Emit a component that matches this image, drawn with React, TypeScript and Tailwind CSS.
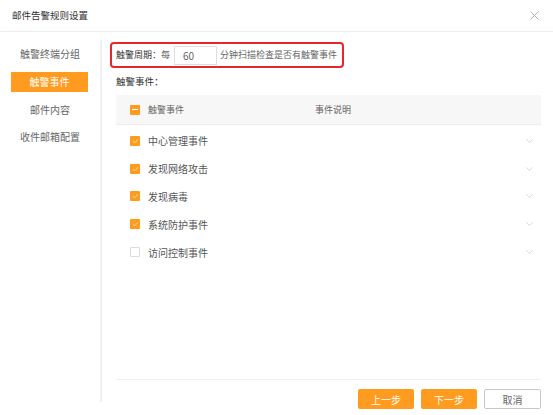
const orange = "bg-[#ff9c1f]";

const events = [
  { name: "中心管理事件", checked: true },
  { name: "发现网络攻击", checked: true },
  { name: "发现病毒", checked: true },
  { name: "系统防护事件", checked: true },
  { name: "访问控制事件", checked: false },
];

const menu = ["触警终端分组", "触警事件", "邮件内容", "收件邮箱配置"];

function Check({ state }: { state: "on" | "off" | "part" }) {
  if (state === "off") {
    return <span className="block h-[10px] w-[10px] rounded-[1px] border border-[#dcdcdc] bg-white" />;
  }
  return (
    <span className={`flex h-[10px] w-[10px] items-center justify-center rounded-[1px] ${orange}`}>
      {state === "on" ? (
        <svg width="7" height="6" viewBox="0 0 7 6" fill="none">
          <path d="M0.8 3 L2.8 4.8 L6.2 1" stroke="#ffd9a8" strokeWidth="1" />
        </svg>
      ) : (
        <span className="block h-[1.5px] w-[6px] bg-white" />
      )}
    </span>
  );
}

export default function App() {
  return (
    <div className="h-[415px] w-[553px] bg-white font-['Noto_Sans_CJK_SC',sans-serif] text-[#666]">
      {/* Header */}
      <div className="flex h-[32px] items-center justify-between border-b border-[#ececec] pl-[12px] pr-[14px]">
        <span className="text-[9.5px] text-[#333]">邮件告警规则设置</span>
        <svg width="9" height="9" viewBox="0 0 9 9">
          <path d="M0.5 0.5 L8.5 8.5 M8.5 0.5 L0.5 8.5" stroke="#aaa" strokeWidth="0.9" />
        </svg>
      </div>

      <div className="flex pt-[8px]">
        {/* Sidebar */}
        <div className="h-[362px] w-[102px] shrink-0 border-r-2 border-[#efefef]">
          {menu.map((m, i) => (
            <div key={m} className="flex h-[27.7px] items-center">
              {i === 1 ? (
                <div className={`ml-[11px] flex h-[20px] w-[77px] items-center justify-center text-[10px] text-white ${orange}`}>
                  {m}
                </div>
              ) : (
                <div className="w-[100px] text-center text-[10px]">{m}</div>
              )}
            </div>
          ))}
        </div>

        {/* Content */}
        <div className="flex flex-1 flex-col pl-[14px] pr-[12px]">
          <div className="-ml-[6px] mt-[2px] flex h-[26px] w-[234px] items-center whitespace-nowrap rounded-[4px] border-2 border-[#e8262a] px-[4px] text-[9px]">
            <span className="text-[#333]">触警周期：</span>
            <span>每</span>
            <div className="ml-[4px] flex h-[19px] w-[43px] shrink-0 items-center border border-[#dedede] pl-[8px] text-[10px]">
              60
            </div>
            <span className="ml-[3px]">分钟扫描检查是否有触警事件</span>
          </div>

          <div className="mt-[5px] h-[16px] text-[9.5px] leading-[16px] text-[#333]">触警事件：</div>

          <div className="mt-[6px] h-[285px] border-b border-[#efefef]">
            <div className="flex h-[30px] items-center border-b border-[#ececec] bg-[#f7f7f7] text-[9px]">
              <div className="flex w-[199px] items-center gap-[8px] pl-[14px]">
                <Check state="part" />
                <span>触警事件</span>
              </div>
              <span>事件说明</span>
            </div>
            <div className="pt-[2px]">
              {events.map((e) => (
                <div key={e.name} className="flex h-[27.8px] items-center pl-[14px] pr-[8px]">
                  <Check state={e.checked ? "on" : "off"} />
                  <span className="ml-[8px] flex-1 text-[10px] text-[#555]">{e.name}</span>
                  <svg width="7" height="4" viewBox="0 0 7 4">
                    <path d="M0.3 0.3 L3.5 3.5 L6.7 0.3" fill="none" stroke="#c8c8c8" strokeWidth="0.7" />
                  </svg>
                </div>
              ))}
            </div>
          </div>

          <div className="mt-[9px] flex justify-end gap-[7px] text-[10px]">
            <button className={`h-[20px] w-[56px] rounded-[2px] text-white ${orange}`}>上一步</button>
            <button className={`h-[20px] w-[56px] rounded-[2px] text-white ${orange}`}>下一步</button>
            <button className="h-[20px] w-[57px] rounded-[2px] border border-[#c8c8c8] bg-white text-[#666]">取消</button>
          </div>
        </div>
      </div>
    </div>
  );
}
